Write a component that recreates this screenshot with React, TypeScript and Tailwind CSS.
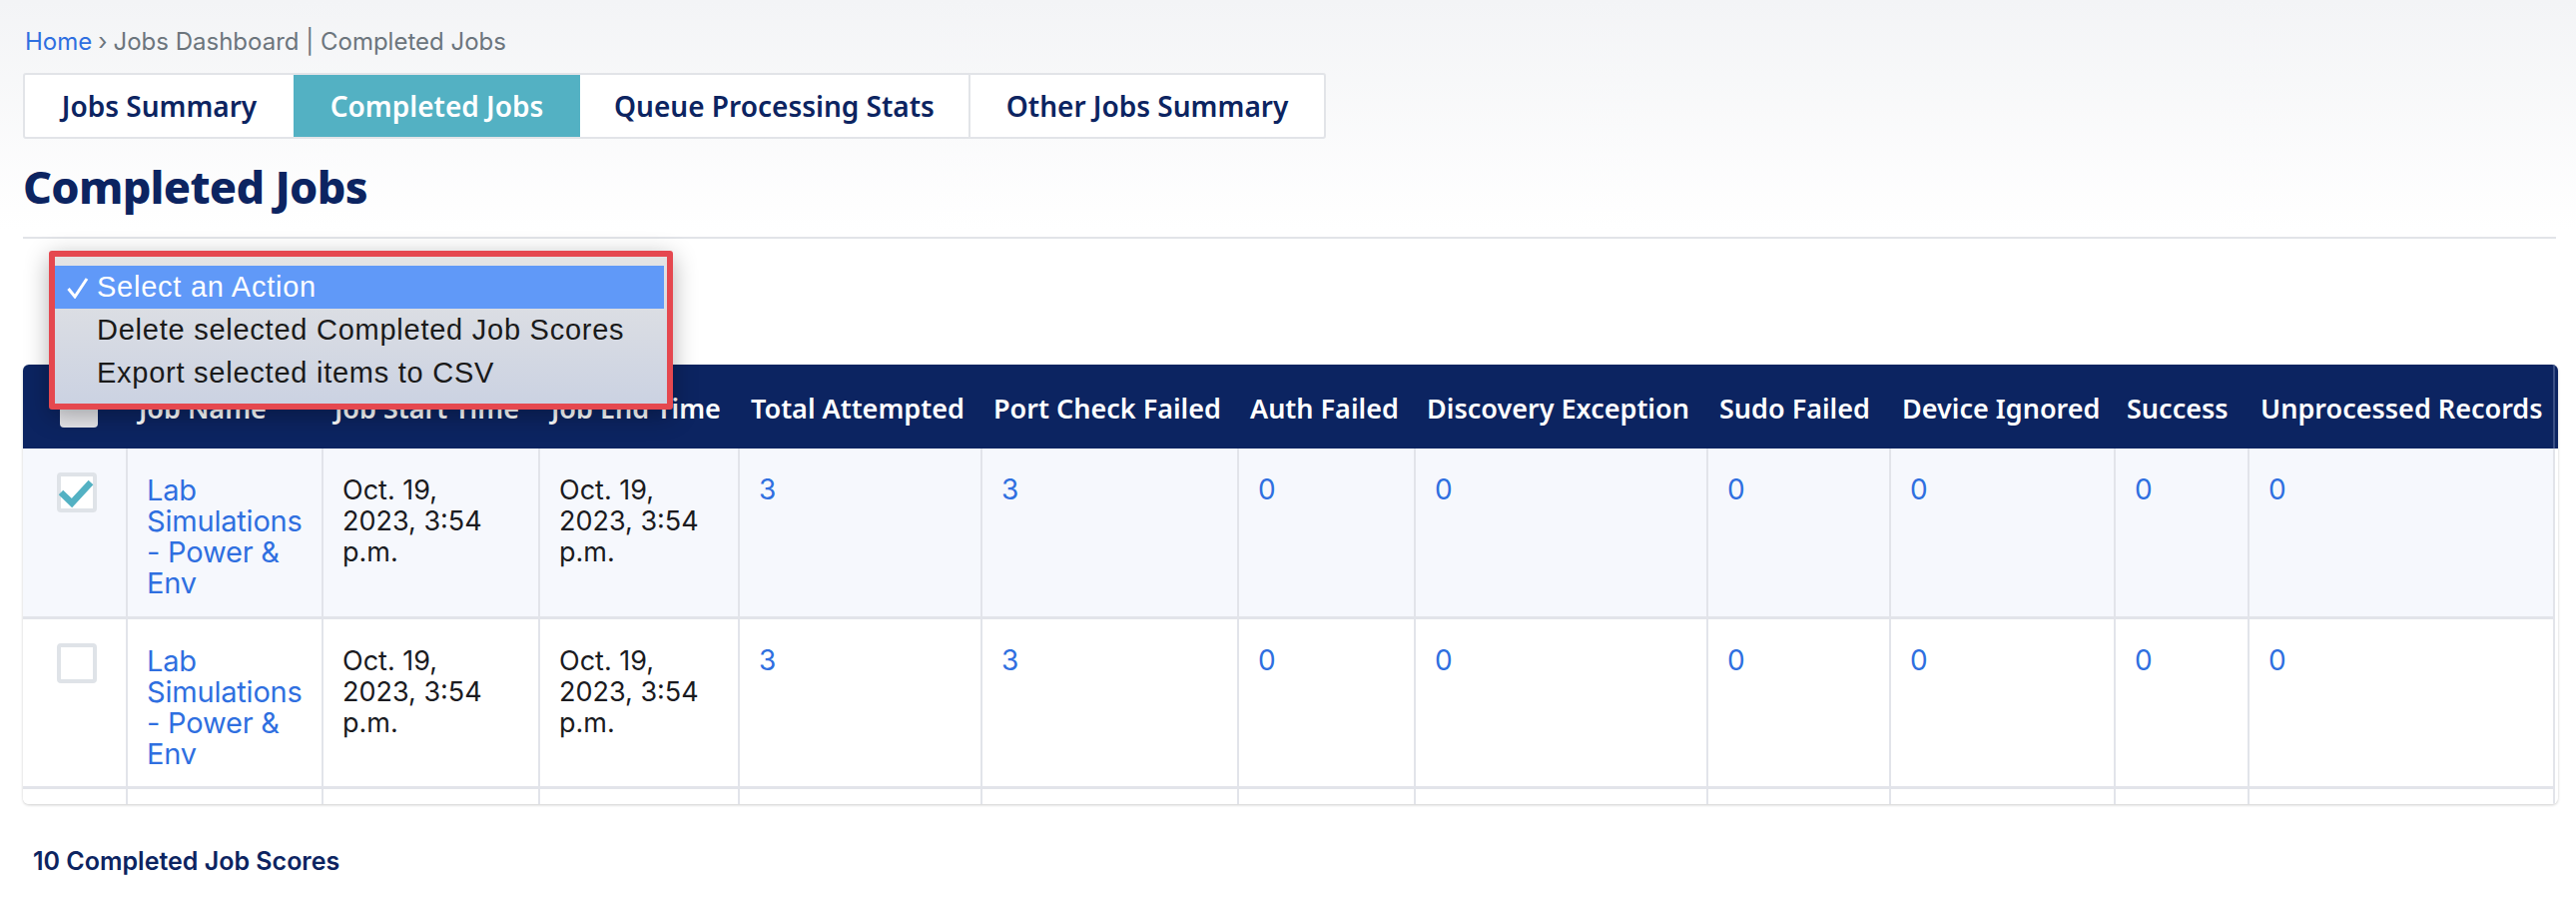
const headings = [
  "",
  "Job Name",
  "Job Start Time",
  "Job End Time",
  "Total Attempted",
  "Port Check Failed",
  "Auth Failed",
  "Discovery Exception",
  "Sudo Failed",
  "Device Ignored",
  "Success",
  "Unprocessed Records",
];

const widths = [104, 196, 217, 200, 243, 257, 177, 293, 183, 225, 134, 306];

const counts = ["3", "3", "0", "0", "0", "0", "0", "0"];

const headingFont = "font-['Noto_Sans',sans-serif]";
const cell = "border-r-2 border-b-[3px] border-[#e2e4ea] align-top pl-[19px] pr-[30px] pt-[26px]";

const Row = ({ checked, tinted }: { checked: boolean; tinted: boolean }) => (
  <tr className={tinted ? "h-[169px] bg-[#f6f8fd]" : "h-[170px] bg-white"}>
    <td className="border-r-2 border-b-[3px] border-[#e2e4ea] align-top pl-[34px] pt-[24px]">
      <div className="flex h-[40px] w-[40px] items-center justify-center rounded-[4px] border-[4px] border-[#dfe3e8] bg-white">
        {checked && (
          <svg viewBox="0 0 40 40" className="h-[40px] w-[40px] shrink-0" fill="none">
            <path d="M4 20 L15 30.5 L34 10" stroke="#53b1c3" strokeWidth="6.5" />
          </svg>
        )}
      </div>
    </td>
    <td className={`${cell} pr-[10px]`}>
      <a className="block text-[29px] leading-[31px] tracking-[-0.2px] text-[#2f6fe0]">Lab Simulations - Power &amp; Env</a>
    </td>
    <td className={cell}>Oct. 19, 2023, 3:54 p.m.</td>
    <td className={cell}>Oct. 19, 2023, 3:54 p.m.</td>
    {counts.map((count, i) => (
      <td key={i} className={`${cell} text-[28px] text-[#2f6fe0]`}>
        {count}
      </td>
    ))}
  </tr>
);

const App = () => {
  return (
    <div className="h-[904px] w-[2580px] overflow-hidden bg-gradient-to-b from-[#f3f4f6] to-white to-[230px] font-['Inter',sans-serif] text-[#1b1b1f]">
      <div className="relative pl-[23px] pr-[20px] pt-[26px]">
        <div className="flex h-[32px] items-center pl-[2px] text-[24px] text-[#6c757d]">
          <a className="text-[#2f6fe0]">Home</a>
          <span className="px-[6px]">›</span>
          <span>Jobs Dashboard | Completed Jobs</span>
        </div>

        <div className={`mt-[15px] flex h-[66px] w-[1305px] overflow-hidden whitespace-nowrap rounded-[3px] border-2 border-[#e2e4e8] bg-white text-[28px] font-semibold text-[#0c2461] ${headingFont}`}>
          <div className="flex w-[269px] items-center justify-center">Jobs Summary</div>
          <div className="flex w-[287px] items-center justify-center bg-[#53b1c3] text-white">Completed Jobs</div>
          <div className="flex w-[391px] items-center justify-center border-r-2 border-[#e2e4e8]">Queue Processing Stats</div>
          <div className="flex flex-1 items-center justify-center">Other Jobs Summary</div>
        </div>

        <h1 className={`mt-[19px] h-[58px] text-[45px] font-extrabold leading-[58px] tracking-[-0.7px] text-[#0c2461] ${headingFont}`}>Completed Jobs</h1>

        <div className="mt-[21px] h-[2px] bg-[#e2e4e8]" />

        <div className="mt-[126px] w-[2539px] overflow-hidden rounded-[6px] shadow-[0_1px_3px_rgba(0,0,0,0.2)]">
          <table className="w-[2539px] table-fixed border-collapse text-[27px] leading-[31px]">
            <colgroup>
              {widths.map((w, i) => (
                <col key={i} style={{ width: w }} />
              ))}
              <col style={{ width: 4 }} />
            </colgroup>
            <thead>
              <tr className="h-[84px] bg-[#0c2461] text-white">
                {headings.map((heading, i) =>
                  i === 0 ? (
                    <th key={i} className="pl-[37px] pt-[2px]">
                      <div className="h-[39px] w-[38px] rounded-[4px] bg-[#e6e6ea]" />
                    </th>
                  ) : (
                    <th key={i} className={`whitespace-nowrap pl-[12px] pt-[2px] text-left text-[27px] font-semibold ${headingFont}`}>
                      {heading}
                    </th>
                  ),
                )}
                <th className="border-l-2 border-[#3a4f85]" />
              </tr>
            </thead>
            <tbody>
              <Row checked tinted />
              <Row checked={false} tinted={false} />
              <tr className="h-[17px] bg-white">
                {widths.map((_, i) => (
                  <td key={i} className="border-r-2 border-[#e2e4ea]" />
                ))}
              </tr>
            </tbody>
          </table>
        </div>

        <div className="mt-[39px] pl-[10px] text-[25px] font-semibold text-[#0c2461]">10 Completed Job Scores</div>

        {/* native select popup, boxed in red over the table header */}
        <div className="absolute left-[49px] top-[251px] h-[159px] w-[625px] rounded-[3px] border-[6px] border-[#e5484f] shadow-[0_6px_24px_rgba(0,0,0,0.3)]">
          <div className="h-full bg-gradient-to-b from-[#e4e4e4] to-[#cbd2e2] pt-[9px] font-['Liberation_Sans',sans-serif] text-[29px] tracking-[0.75px] text-[#1a1a1a]">
            <div className="mr-[3px] flex h-[43px] items-center bg-[#6099f8] text-white">
              <span className="flex w-[42px] pl-[12px]">
                <svg viewBox="0 0 22 22" className="h-[22px] w-[22px]" fill="none">
                  <path d="M1.5 12 L8 20 L20 2" stroke="white" strokeWidth="3" />
                </svg>
              </span>
              Select an Action
            </div>
            <div className="flex h-[43px] items-center pl-[42px]">Delete selected Completed Job Scores</div>
            <div className="flex h-[43px] items-center pl-[42px]">Export selected items to CSV</div>
          </div>
        </div>
      </div>
    </div>
  );
};

export default App;
